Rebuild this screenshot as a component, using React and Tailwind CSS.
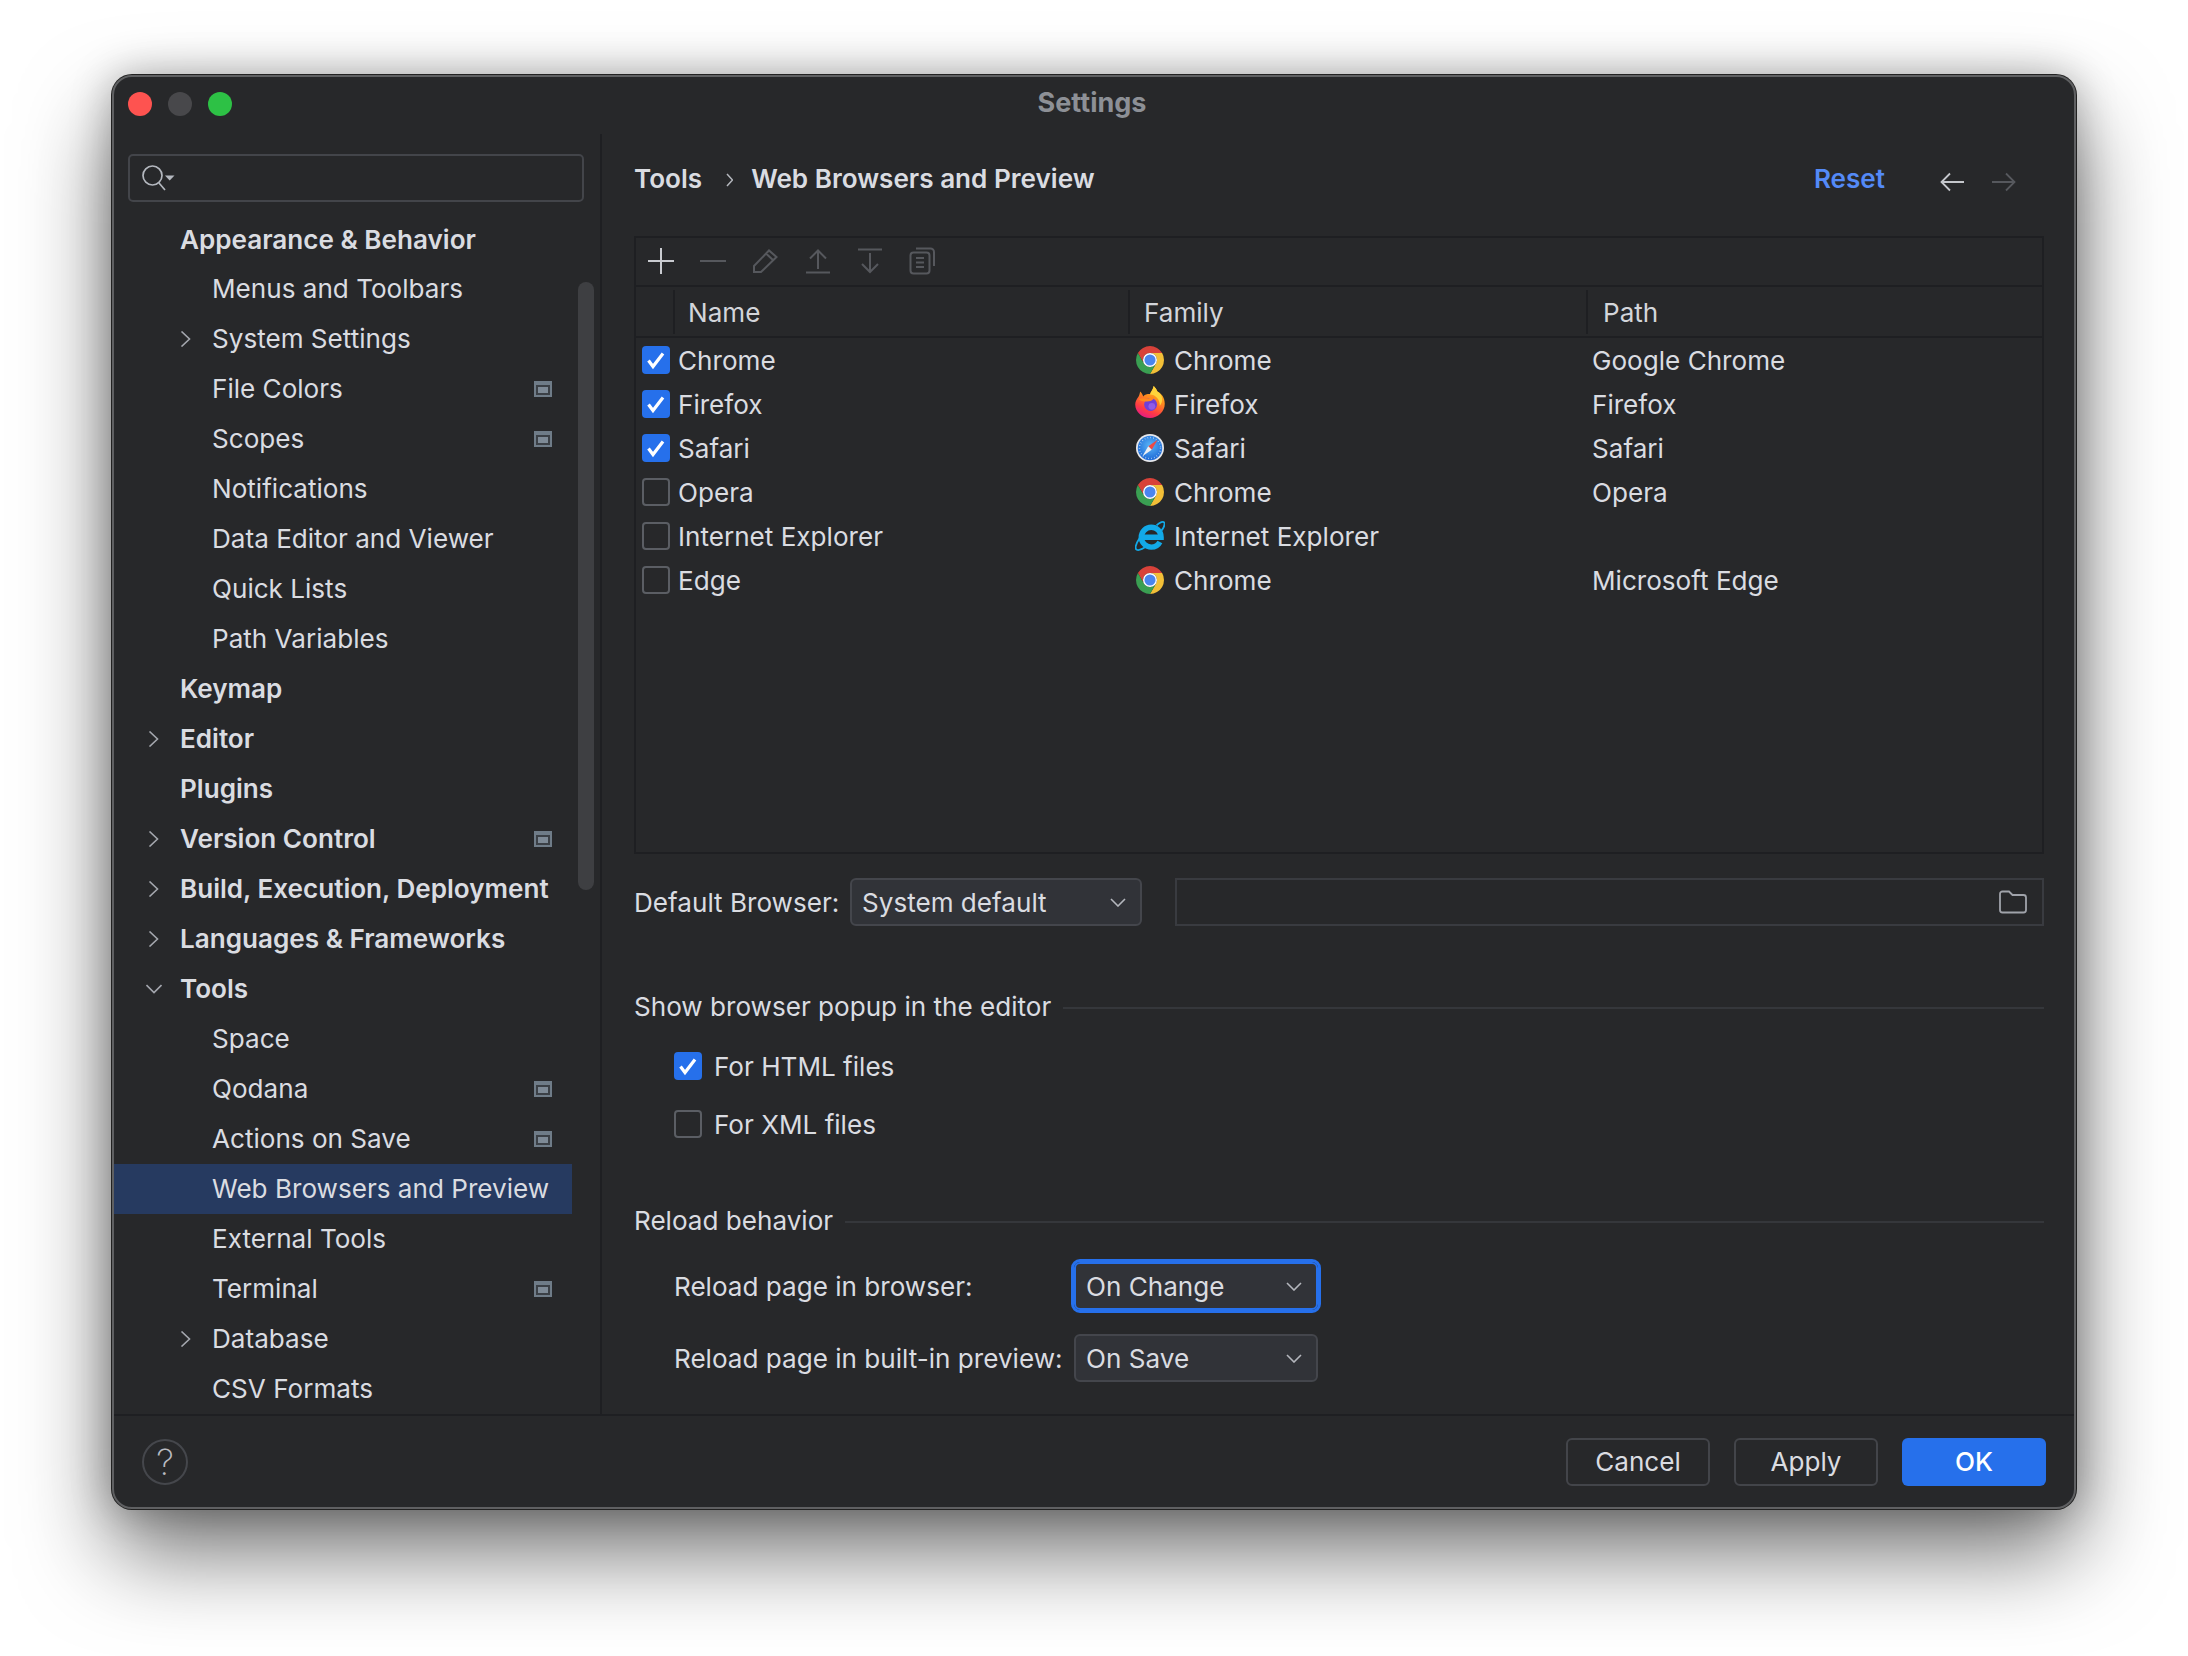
import React from 'react';

const sidebarItems = [
  { label: 'Menus and Toolbars', sub: true },
  { label: 'System Settings', sub: true, arrow: 'right' },
  { label: 'File Colors', sub: true, badge: true },
  { label: 'Scopes', sub: true, badge: true },
  { label: 'Notifications', sub: true },
  { label: 'Data Editor and Viewer', sub: true },
  { label: 'Quick Lists', sub: true },
  { label: 'Path Variables', sub: true },
  { label: 'Keymap' },
  { label: 'Editor', arrow: 'right' },
  { label: 'Plugins' },
  { label: 'Version Control', arrow: 'right', badge: true },
  { label: 'Build, Execution, Deployment', arrow: 'right' },
  { label: 'Languages & Frameworks', arrow: 'right' },
  { label: 'Tools', arrow: 'down' },
  { label: 'Space', sub: true },
  { label: 'Qodana', sub: true, badge: true },
  { label: 'Actions on Save', sub: true, badge: true },
  { label: 'Web Browsers and Preview', sub: true, selected: true },
  { label: 'External Tools', sub: true },
  { label: 'Terminal', sub: true, badge: true },
  { label: 'Database', sub: true, arrow: 'right' },
  { label: 'CSV Formats', sub: true },
];

const browsers = [
  { name: 'Chrome', checked: true, family: 'Chrome', path: 'Google Chrome' },
  { name: 'Firefox', checked: true, family: 'Firefox', path: 'Firefox' },
  { name: 'Safari', checked: true, family: 'Safari', path: 'Safari' },
  { name: 'Opera', checked: false, family: 'Chrome', path: 'Opera' },
  { name: 'Internet Explorer', checked: false, family: 'Internet Explorer', path: '' },
  { name: 'Edge', checked: false, family: 'Chrome', path: 'Microsoft Edge' },
];

const ChevronRow = ({ dir }) => (
  <svg width="16" height="16" viewBox="0 0 16 16" fill="none" stroke="#a4a7ae" strokeWidth="1.6">
    {dir === 'right' ? <path d="M3.5 0.5 L11.5 8 L3.5 15.5" /> : <path d="M0.5 4 L8 11.5 L15.5 4" />}
  </svg>
);

const Badge = () => (
  <svg width="18" height="16" viewBox="0 0 18 16" className="mr-[20px] shrink-0">
    <rect width="18" height="16" fill="#6f7c88" />
    <rect x="2" y="4" width="14" height="10" fill="#3b4046" />
    <rect x="4" y="6" width="10" height="6" fill="#7e8a96" />
  </svg>
);

const SidebarRow = ({ item }) => (
  <div
    className={`flex items-center w-[458px] h-[50px] pb-[1px] ${item.selected ? 'bg-[#263a60]' : ''} ${item.sub ? '' : 'font-semibold'}`}
  >
    <div className={`flex justify-end shrink-0 pr-[18px] ${item.sub ? 'w-[98px]' : 'w-[66px]'}`}>
      {item.arrow && <ChevronRow dir={item.arrow} />}
    </div>
    <span className="flex-1 whitespace-nowrap">{item.label}</span>
    {item.badge && <Badge />}
  </div>
);

const Check = ({ checked }) =>
  checked ? (
    <div className="w-[28px] h-[28px] shrink-0 rounded-[4px] bg-[#2670eb]">
      <svg width="28" height="28" viewBox="0 0 28 28" fill="none" stroke="#fff" strokeWidth="3.2">
        <path d="M6.5 14.5 L11 20.5 L21 7.5" />
      </svg>
    </div>
  ) : (
    <div className="w-[28px] h-[28px] shrink-0 rounded-[4px] border-2 border-[#5b5e64]" />
  );

const ChromeIcon = () => (
  <svg width="28" height="28" viewBox="0 0 48 48" className="shrink-0">
    <path fill="#d8423a" d="M24 12H44.78A24 24 0 0 0 3.22 12L13.61 30A12 12 0 0 1 24 12Z" />
    <path fill="#f2bf37" d="M34.39 30L24 48A24 24 0 0 0 44.78 12H24A12 12 0 0 1 34.39 30Z" />
    <path fill="#3a9f52" d="M13.61 30L3.22 12A24 24 0 0 0 24 48L34.39 30A12 12 0 0 1 13.61 30Z" />
    <circle cx="24" cy="24" r="12" fill="#fff" />
    <circle cx="24" cy="24" r="9.5" fill="#4a85ee" />
  </svg>
);

const FirefoxIcon = () => (
  <svg width="30" height="32" viewBox="0 0 48 52" className="shrink-0 -ml-[1px] -mr-[1px] -mt-[3px] overflow-visible">
    <defs>
      <linearGradient id="ffBody" x1="0.75" y1="0" x2="0.3" y2="1">
        <stop offset="0" stopColor="#ffc51f" />
        <stop offset="0.4" stopColor="#ff8a1f" />
        <stop offset="0.75" stopColor="#ff3a45" />
        <stop offset="1" stopColor="#e31a87" />
      </linearGradient>
    </defs>
    <path
      fill="url(#ffBody)"
      d="M30 0C29 6 25 9 24 13C19 13 15 14 13 17C12 14 11 12 8 9C7 13 7 15 5 18C2 22 0 26 0 30C0 42 11 52 24 52C37 52 48 42 48 29C48 18 42 12 36 9C35 6 33 3 30 0Z"
    />
    <path fill="#ffd43b" d="M30 0C29 6 25 10 24 14C33 14 40 22 40 32C46 26 45 14 36 9C35 6 33 3 30 0Z" />
    <circle cx="25" cy="30" r="10.5" fill="#6f3fd8" />
    <circle cx="27" cy="33" r="5.5" fill="#8f5ce8" />
    <path fill="#ff8a1f" d="M6 21C11 19 15 20 19 21C23 20 27 17 31 19C28 24 22 26 16 25C12 25 8 24 6 21Z" />
  </svg>
);

const SafariIcon = () => (
  <svg width="28" height="28" viewBox="0 0 48 48" className="shrink-0">
    <defs>
      <radialGradient id="safBlue" cx="0.5" cy="0.4" r="0.6">
        <stop offset="0" stopColor="#5ab5f7" />
        <stop offset="1" stopColor="#1d69d6" />
      </radialGradient>
    </defs>
    <circle cx="24" cy="24" r="24" fill="#e6e8ec" />
    <circle cx="24" cy="24" r="21" fill="url(#safBlue)" />
    <circle cx="24" cy="24" r="18" fill="none" stroke="#cfe3f8" strokeWidth="2.5" strokeDasharray="1 4" />
    <path fill="#ee4a44" d="M37 10L21 21L27 27Z" />
    <path fill="#eef0f3" d="M11 38L21 21L27 27Z" />
  </svg>
);

const IeIcon = () => (
  <svg width="30" height="30" viewBox="0 0 50 50" className="shrink-0 -ml-[1px] -mr-[1px]">
    <g fill="none" stroke="#12a9e8">
      <path strokeWidth="3" d="M8 28C1 39 -1 46 3 48C7 50 14 46 21 41M36 7C42 2 47 0 49 3C50 6 48 11 44 16" />
      <path
        strokeWidth="9"
        d="M11 27H43.5C43.5 17 36 10.5 27 10.5C18 10.5 10.5 18 10.5 27C10.5 36 18 43.5 27 43.5C34 43.5 39 40 41.5 35"
      />
    </g>
  </svg>
);

const familyIcons = {
  Chrome: ChromeIcon,
  Firefox: FirefoxIcon,
  Safari: SafariIcon,
  'Internet Explorer': IeIcon,
};

const ToolIcon = ({ children }) => (
  <svg width="28" height="28" viewBox="0 0 28 28" fill="none" stroke="#56585d" strokeWidth="2" className="shrink-0">
    {children}
  </svg>
);

const DropChevron = () => (
  <svg width="16" height="9" viewBox="0 0 16 9" fill="none" stroke="#b4b7bd" strokeWidth="1.6" className="shrink-0">
    <path d="M1 1L8 8L15 1" />
  </svg>
);

const Combo = ({ label, width, focused }) => (
  <div
    className={`flex items-center justify-between h-[48px] pl-[10px] pr-[14px] rounded-[6px] border-2 bg-[#313338] shrink-0 ${width} ${
      focused ? 'border-[#2670eb] outline-[3px] outline-[#2670eb]' : 'border-[#44464c]'
    }`}
  >
    <span className="mt-[1px] whitespace-nowrap">{label}</span>
    <DropChevron />
  </div>
);

const GroupTitle = ({ children, className }) => (
  <div className={`flex items-center h-[32px] gap-[12px] ${className}`}>
    <span className="whitespace-nowrap">{children}</span>
    <div className="flex-1 h-[2px] mt-[2px] bg-[#35373b]" />
  </div>
);

const HeaderSep = () => <div className="w-[2px] h-[44px] bg-[#1e1f22] shrink-0" />;

export default function App() {
  return (
    <div className="w-[2188px] h-[1656px] bg-white pt-[75px] pl-[112px] overflow-hidden font-[Inter,sans-serif] text-[26.1px] text-[#dadce1]">
      <div className="w-[1964px] h-[1434px] flex flex-col rounded-[20px] border-2 border-[#5f6062] bg-[#27282a] overflow-hidden shadow-[0_0_0_1px_#222,0_44px_90px_rgba(0,0,0,0.55),0_0_40px_rgba(0,0,0,0.28)]">
        {/* title bar */}
        <div className="grid grid-cols-[1fr_auto_1fr] h-[57px] shrink-0">
          <div className="flex gap-[16px] pl-[14px] pt-[15px]">
            <div className="w-[24px] h-[24px] rounded-full bg-[#fe5350]" />
            <div className="w-[24px] h-[24px] rounded-full bg-[#48484b]" />
            <div className="w-[24px] h-[24px] rounded-full bg-[#2dc145]" />
          </div>
          <div className="pt-[6px] pr-[4px] text-[27px] font-bold text-[#8d9096]">Settings</div>
          <div />
        </div>

        <div className="flex flex-1 min-h-0">
          {/* sidebar */}
          <div className="relative w-[488px] shrink-0 border-r-2 border-[#1e1f22]">
            <div className="flex items-center ml-[14px] mt-[20px] w-[456px] h-[48px] rounded-[5px] border-2 border-[#43454a] pl-[12px]">
              <svg width="36" height="26" viewBox="0 0 36 26" fill="none" stroke="#b4b8bf" strokeWidth="1.7">
                <circle cx="10.5" cy="10.5" r="9.5" />
                <path d="M17 18L23 25" />
                <path d="M23 10.5H32.5L27.7 15.5Z" fill="#b4b8bf" stroke="none" />
              </svg>
            </div>
            <div className="mt-[14px]">
              <div className="flex items-center w-[458px] h-[48px] pl-[66px] font-semibold">Appearance &amp; Behavior</div>
              {sidebarItems.map((item) => (
                <SidebarRow key={item.label} item={item} />
              ))}
            </div>
            <div className="absolute left-[464px] top-[148px] w-[16px] h-[608px] rounded-full bg-[#3e3f42]" />
          </div>

          {/* main panel */}
          <div className="flex-1 min-w-0 pl-[32px] pr-[30px] overflow-hidden">
            <div className="flex items-center h-[90px] mb-[12px]">
              <span className="font-semibold">Tools</span>
              <svg width="7" height="14" viewBox="0 0 7 14" fill="none" stroke="#b4b7bd" strokeWidth="1.5" className="ml-[24px] mr-[18px] mt-[2px]">
                <path d="M1 1L6.5 7L1 13" />
              </svg>
              <span className="font-semibold">Web Browsers and Preview</span>
              <span className="ml-auto font-semibold text-[#548af7]">Reset</span>
              <svg width="24" height="20" viewBox="0 0 24 20" fill="none" stroke="#c4c6cb" strokeWidth="1.8" className="ml-[55px] mt-[6px]">
                <path d="M24 10H2M10 1.5L1.5 10L10 18.5" />
              </svg>
              <svg width="24" height="20" viewBox="0 0 24 20" fill="none" stroke="#56585d" strokeWidth="1.8" className="ml-[28px] mr-[28px] mt-[6px]">
                <path d="M0 10H22M14 1.5L22.5 10L14 18.5" />
              </svg>
            </div>

            {/* browsers table */}
            <div className="h-[618px] border-2 border-[#1e1f22]">
              <div className="flex items-center gap-[24.2px] h-[49px] pl-[11px] pb-[2px] border-b-2 border-[#1e1f22]">
                <svg width="28" height="28" viewBox="0 0 28 28" fill="none" stroke="#c9cbd0" strokeWidth="2" className="shrink-0">
                  <path d="M14 1V27M1 14H27" />
                </svg>
                <ToolIcon>
                  <path d="M1 14H27" />
                </ToolIcon>
                <ToolIcon>
                  <path d="M3 25V19L18 3.5L25.5 10L10 25ZM15 6.5L22.5 13.5" />
                </ToolIcon>
                <ToolIcon>
                  <path d="M14 22V4M6 11.5L14 3.5L22 11.5M2 25.5H26" />
                </ToolIcon>
                <ToolIcon>
                  <path d="M14 6V25M6 17L14 25L22 17M2 2.5H26" />
                </ToolIcon>
                <ToolIcon>
                  <rect x="2.5" y="5.5" width="19" height="21" rx="3" />
                  <path d="M8 1.5H22.5A3.5 3.5 0 0 1 26 5V19M8 11H16M8 15.5H16M8 20H16" />
                </ToolIcon>
              </div>
              <div className="flex items-center h-[51px] border-b-2 border-[#1e1f22] text-[#d3d5da]">
                <div className="w-[37px] shrink-0" />
                <HeaderSep />
                <div className="w-[453px] pl-[13px] pt-[2px] shrink-0">Name</div>
                <HeaderSep />
                <div className="w-[456px] pl-[14px] pt-[2px] shrink-0">Family</div>
                <HeaderSep />
                <div className="flex-1 pl-[15px] pt-[2px]">Path</div>
              </div>
              {browsers.map((b) => {
                const Icon = familyIcons[b.family];
                return (
                  <div key={b.name} className="flex items-center h-[44px]">
                    <div className="flex items-center gap-[8px] w-[500px] pl-[6px] shrink-0">
                      <Check checked={b.checked} />
                      <span className="mt-[1px]">{b.name}</span>
                    </div>
                    <div className="flex items-center gap-[10px] w-[456px] shrink-0">
                      <Icon />
                      <span className="mt-[1px]">{b.family}</span>
                    </div>
                    <span className="mt-[1px]">{b.path}</span>
                  </div>
                );
              })}
            </div>

            {/* default browser */}
            <div className="flex items-center mt-[24px] h-[48px]">
              <span className="mt-[1px] w-[216px] shrink-0">Default Browser:</span>
              <Combo label="System default" width="w-[292px]" />
              <div className="flex items-center justify-end flex-1 h-[48px] ml-[33px] pr-[15px] border-2 border-[#393b40]">
                <svg width="28" height="24" viewBox="0 0 28 24" fill="none" stroke="#a0a3aa" strokeWidth="1.8">
                  <path d="M1 20V4A2.5 2.5 0 0 1 3.5 1.5H10L13.5 5H24.5A2.5 2.5 0 0 1 27 7.5V20A2.5 2.5 0 0 1 24.5 22.5H3.5A2.5 2.5 0 0 1 1 20Z" />
                </svg>
              </div>
            </div>

            <GroupTitle className="mt-[65px]">Show browser popup in the editor</GroupTitle>
            <div className="flex items-center gap-[12px] h-[28px] mt-[29px] pl-[40px]">
              <Check checked />
              <span className="mt-[1px]">For HTML files</span>
            </div>
            <div className="flex items-center gap-[12px] h-[28px] mt-[30px] pl-[40px]">
              <Check checked={false} />
              <span className="mt-[1px]">For XML files</span>
            </div>

            <GroupTitle className="mt-[67px]">Reload behavior</GroupTitle>
            <div className="flex items-center mt-[25px] pl-[40px]">
              <span className="mt-[1px] w-[400px] shrink-0">Reload page in browser:</span>
              <Combo label="On Change" width="w-[244px]" focused />
            </div>
            <div className="flex items-center mt-[24px] pl-[40px]">
              <span className="mt-[1px] w-[400px] shrink-0">Reload page in built-in preview:</span>
              <Combo label="On Save" width="w-[244px]" />
            </div>
          </div>
        </div>

        {/* footer */}
        <div className="flex items-start justify-between h-[93px] shrink-0 border-t-2 border-[#1e1f22] pt-[22px] pl-[28px] pr-[28px]">
          <div className="flex items-center justify-center w-[46px] h-[46px] mt-[1px] rounded-full border-2 border-[#45474c] text-[36px] leading-none font-extralight text-[#b9bbc1]">
            ?
          </div>
          <div className="flex gap-[24px]">
            <div className="flex items-center justify-center w-[144px] h-[48px] rounded-[6px] border-2 border-[#43454a]">Cancel</div>
            <div className="flex items-center justify-center w-[144px] h-[48px] rounded-[6px] border-2 border-[#43454a]">Apply</div>
            <div className="flex items-center justify-center w-[144px] h-[48px] rounded-[6px] bg-[#2670eb] text-white font-medium">OK</div>
          </div>
        </div>
      </div>
    </div>
  );
}
